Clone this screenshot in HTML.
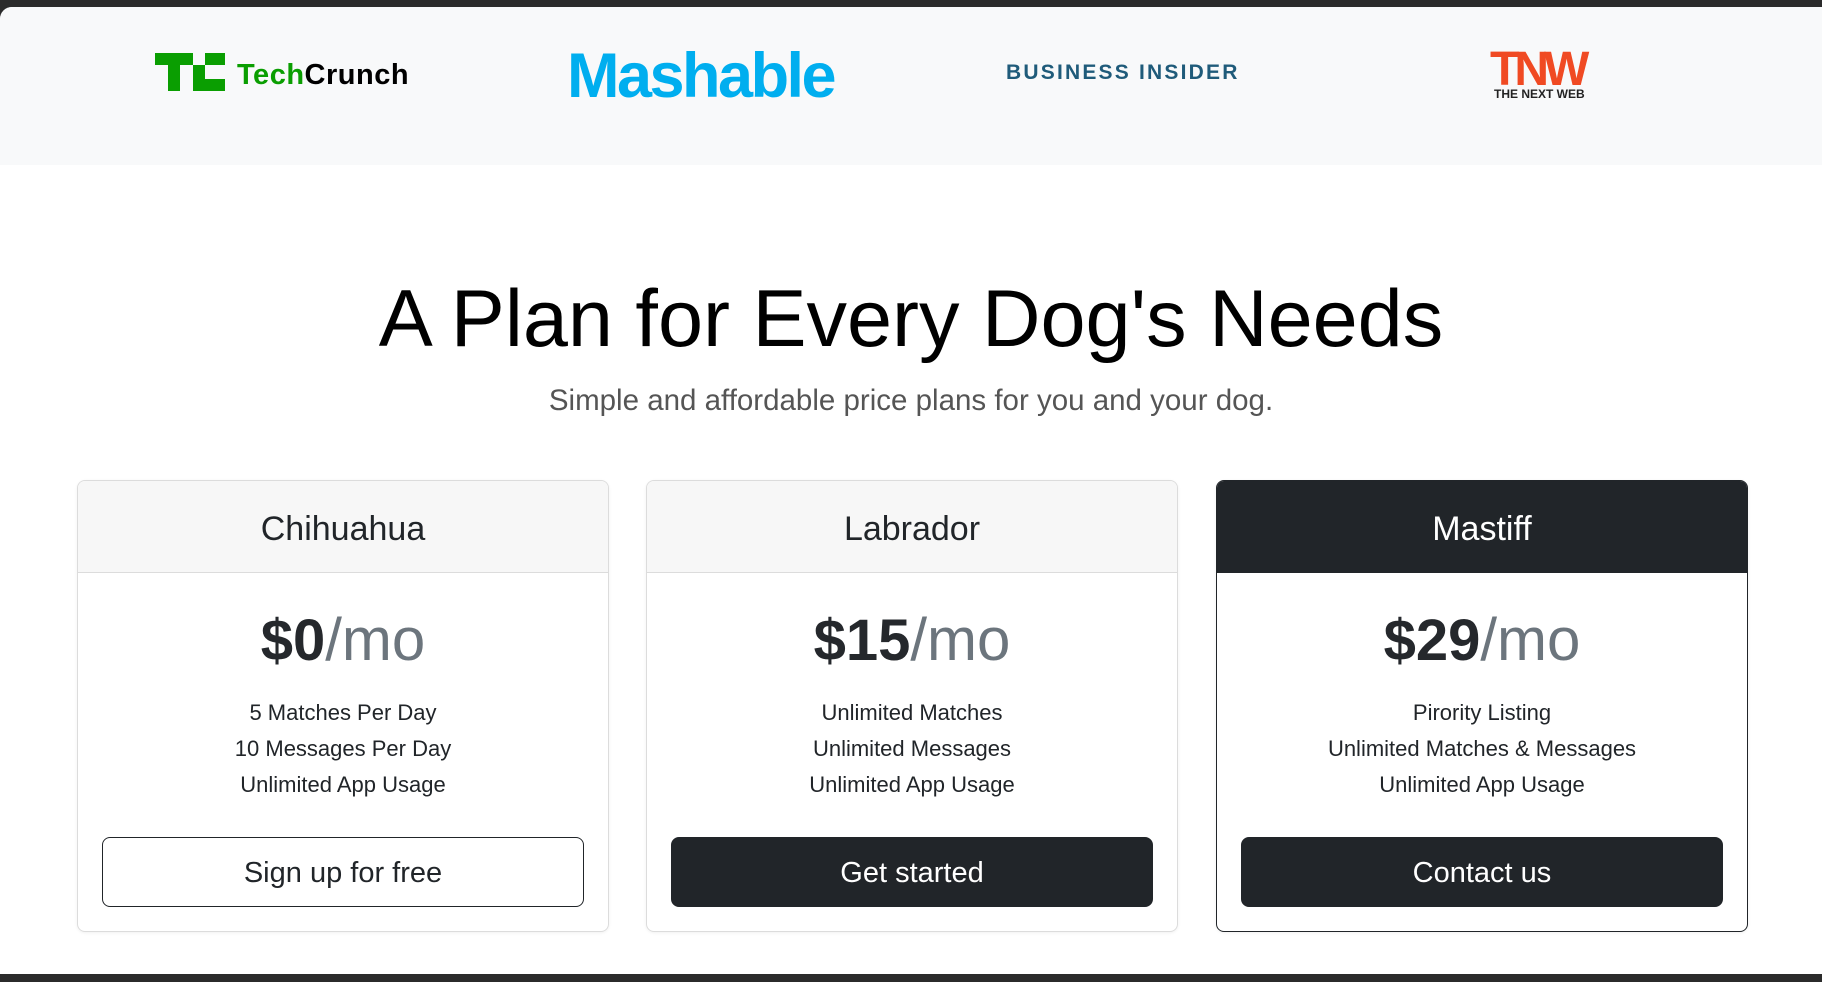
<!DOCTYPE html>
<html><head><meta charset="utf-8"><style>
*{box-sizing:border-box;margin:0;padding:0}
html,body{width:1822px;height:982px;overflow:hidden;background:#2b2b2b;font-family:"Liberation Sans",sans-serif;color:#212529}
.page{position:absolute;left:0;top:7px;width:1822px;height:967px;background:#fff;border-top-left-radius:12px;overflow:hidden}
.band{position:absolute;left:0;top:0;width:1822px;height:158px;background:#f8f9fa}
.abs{position:absolute;white-space:nowrap}
h1{position:absolute;left:0;width:1822px;top:262px;text-align:center;font-weight:400;font-size:81px;line-height:100px;color:#000}
.sub{position:absolute;left:0;width:1822px;top:377px;text-align:center;font-size:29.5px;color:#555;font-weight:300}
.card{position:absolute;top:473px;width:532px;height:452px;border:1px solid #dcdcdc;border-radius:8px;overflow:hidden;box-shadow:0 1px 3px rgba(0,0,0,.06)}
.hd{height:92px;background:#f7f7f7;border-bottom:1px solid #dcdcdc;text-align:center;font-size:34px;line-height:96px}
.dark{border-color:#212529}
.dark .hd{background:#212529;color:#fff;border-color:#212529}
.price{text-align:center;font-size:60px;margin-top:31px;line-height:72px}
.price b{font-weight:700;font-size:58px;color:#25282c}
.price span{color:#6c757d;font-weight:300}
.ft{text-align:center;font-size:22px;line-height:36px;margin-top:18px}
.btn{position:absolute;left:24px;right:24px;top:356px;height:70px;border-radius:8px;text-align:center;font-size:29px;line-height:71px;background:#212529;color:#fff;border:1px solid #212529}
.btn.o{background:#fff;color:#212529}
</style></head><body>
<div class="page">
<div class="band">
 <svg class="abs" style="left:155px;top:46px" width="70" height="40" viewBox="0 0 70 40"><g fill="#0a9e01"><rect x="0" y="0" width="38" height="12"/><rect x="13" y="0" width="12" height="38"/><rect x="38" y="12" width="12" height="26"/><rect x="50" y="0" width="20" height="12"/><rect x="50" y="26" width="20" height="12"/></g></svg>
 <div class="abs" style="left:237px;top:52px;font-size:29px;font-weight:700;letter-spacing:0.5px"><span style="color:#0a9e01">Tech</span><span style="color:#000">Crunch</span></div>
 <div class="abs" style="left:567px;top:34px;font-size:63px;font-weight:700;color:#00aeef;letter-spacing:-2.5px;line-height:70px">Mashable</div>
 <div class="abs" style="left:1006px;top:54px;font-size:21px;color:#1f5b7a;letter-spacing:2.2px;font-weight:700">BUSINESS INSIDER</div>
 <div class="abs" style="left:1490px;top:38px;font-size:48px;font-weight:700;color:#f04a23;letter-spacing:-5px;line-height:50px">TNW</div>
 <div class="abs" style="left:1494px;top:80px;font-size:12px;font-weight:700;color:#222">THE NEXT WEB</div>
</div>
<h1>A Plan for Every Dog's Needs</h1>
<div class="sub">Simple and affordable price plans for you and your dog.</div>
<div class="card" style="left:77px"><div class="hd">Chihuahua</div><div class="price"><b>$0</b><span>/mo</span></div><div class="ft">5 Matches Per Day<br>10 Messages Per Day<br>Unlimited App Usage</div><div class="btn o">Sign up for free</div></div>
<div class="card" style="left:646px"><div class="hd">Labrador</div><div class="price"><b>$15</b><span>/mo</span></div><div class="ft">Unlimited Matches<br>Unlimited Messages<br>Unlimited App Usage</div><div class="btn">Get started</div></div>
<div class="card dark" style="left:1216px"><div class="hd">Mastiff</div><div class="price"><b>$29</b><span>/mo</span></div><div class="ft">Pirority Listing<br>Unlimited Matches &amp; Messages<br>Unlimited App Usage</div><div class="btn">Contact us</div></div>
</div>
</body></html>
